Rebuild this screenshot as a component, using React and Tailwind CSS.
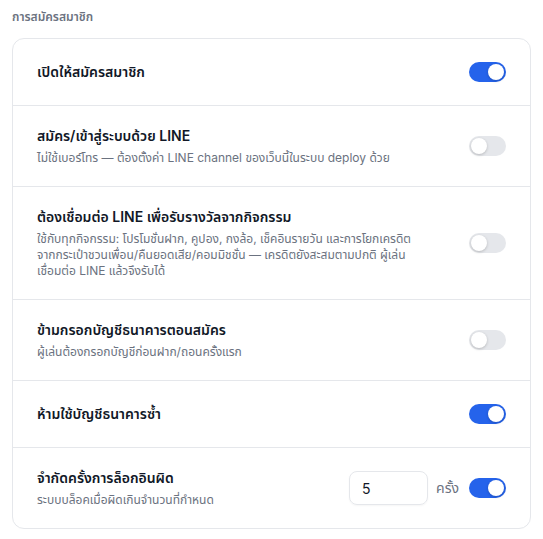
import { useState } from "react";

const rows = [
  { key: "open", title: "เปิดให้สมัครสมาชิก", on: true },
  {
    key: "line",
    title: "สมัคร/เข้าสู่ระบบด้วย LINE",
    desc: "ไม่ใช้เบอร์โทร — ต้องตั้งค่า LINE channel ของเว็บนี้ในระบบ deploy ด้วย",
    on: false,
  },
  {
    key: "lineReward",
    title: "ต้องเชื่อมต่อ LINE เพื่อรับรางวัลจากกิจกรรม",
    desc: "ใช้กับทุกกิจกรรม: โปรโมชั่นฝาก, คูปอง, กงล้อ, เช็คอินรายวัน และการโยกเครดิตจากกระเป๋าชวนเพื่อน/คืนยอดเสีย/คอมมิชชั่น — เครดิตยังสะสมตามปกติ ผู้เล่นเชื่อมต่อ LINE แล้วจึงรับได้",
    on: false,
  },
  {
    key: "skipBank",
    title: "ข้ามกรอกบัญชีธนาคารตอนสมัคร",
    desc: "ผู้เล่นต้องกรอกบัญชีก่อนฝาก/ถอนครั้งแรก",
    on: false,
  },
  { key: "dupBank", title: "ห้ามใช้บัญชีธนาคารซ้ำ", on: true },
  {
    key: "loginLimit",
    title: "จำกัดครั้งการล็อกอินผิด",
    desc: "ระบบบล็อคเมื่อผิดเกินจำนวนที่กำหนด",
    on: true,
    limit: true,
  },
];

function Toggle({ on, onChange }) {
  return (
    <button
      onClick={onChange}
      className={`relative shrink-0 w-[37px] h-5 rounded-full transition-colors ${
        on ? "bg-[#2563eb]" : "bg-[#e5e7eb]"
      }`}
    >
      <span
        className={`absolute top-[2px] w-4 h-4 rounded-full bg-white shadow-[0_1px_3px_rgba(0,0,0,0.2)] transition-all ${
          on ? "left-[19px]" : "left-[2px]"
        }`}
      />
    </button>
  );
}

export default function App() {
  const [state, setState] = useState(
    Object.fromEntries(rows.map((r) => [r.key, r.on]))
  );
  const [limit, setLimit] = useState("5");

  return (
    <div
      className="bg-white px-3 pt-[9px] pb-3 text-[#111827]"
      style={{ fontFamily: 'Inter, "Noto Sans", "Noto Sans Thai", sans-serif' }}
    >
      <h2 className="text-xs font-semibold text-[#6b7280] mb-[13px]">การสมัครสมาชิก</h2>

      <div className="border border-[#e5e7eb] rounded-xl divide-y divide-[#e5e7eb]">
        {rows.map((r) => (
          <div
            key={r.key}
            className={`flex items-center gap-4 px-6 ${r.desc ? "py-5" : "py-[23px]"}`}
          >
            <div className="flex-1 min-w-0">
              <p className="text-sm font-semibold leading-5">{r.title}</p>
              {r.desc && (
                <p className="text-xs text-[#6b7280] leading-4 mt-1 pr-10">{r.desc}</p>
              )}
            </div>
            <div className="flex items-center gap-2">
              {r.limit && (
                <>
                  <input
                    value={limit}
                    onChange={(e) => setLimit(e.target.value)}
                    className="w-[79px] h-[34px] rounded-lg border border-[#e5e7eb] px-3 text-sm shadow-[0_1px_2px_rgba(0,0,0,0.04)] focus:outline-none"
                  />
                  <span className="text-sm text-[#6b7280] mr-[2px]">ครั้ง</span>
                </>
              )}
              <Toggle
                on={state[r.key]}
                onChange={() => setState((s) => ({ ...s, [r.key]: !s[r.key] }))}
              />
            </div>
          </div>
        ))}
      </div>
    </div>
  );
}
